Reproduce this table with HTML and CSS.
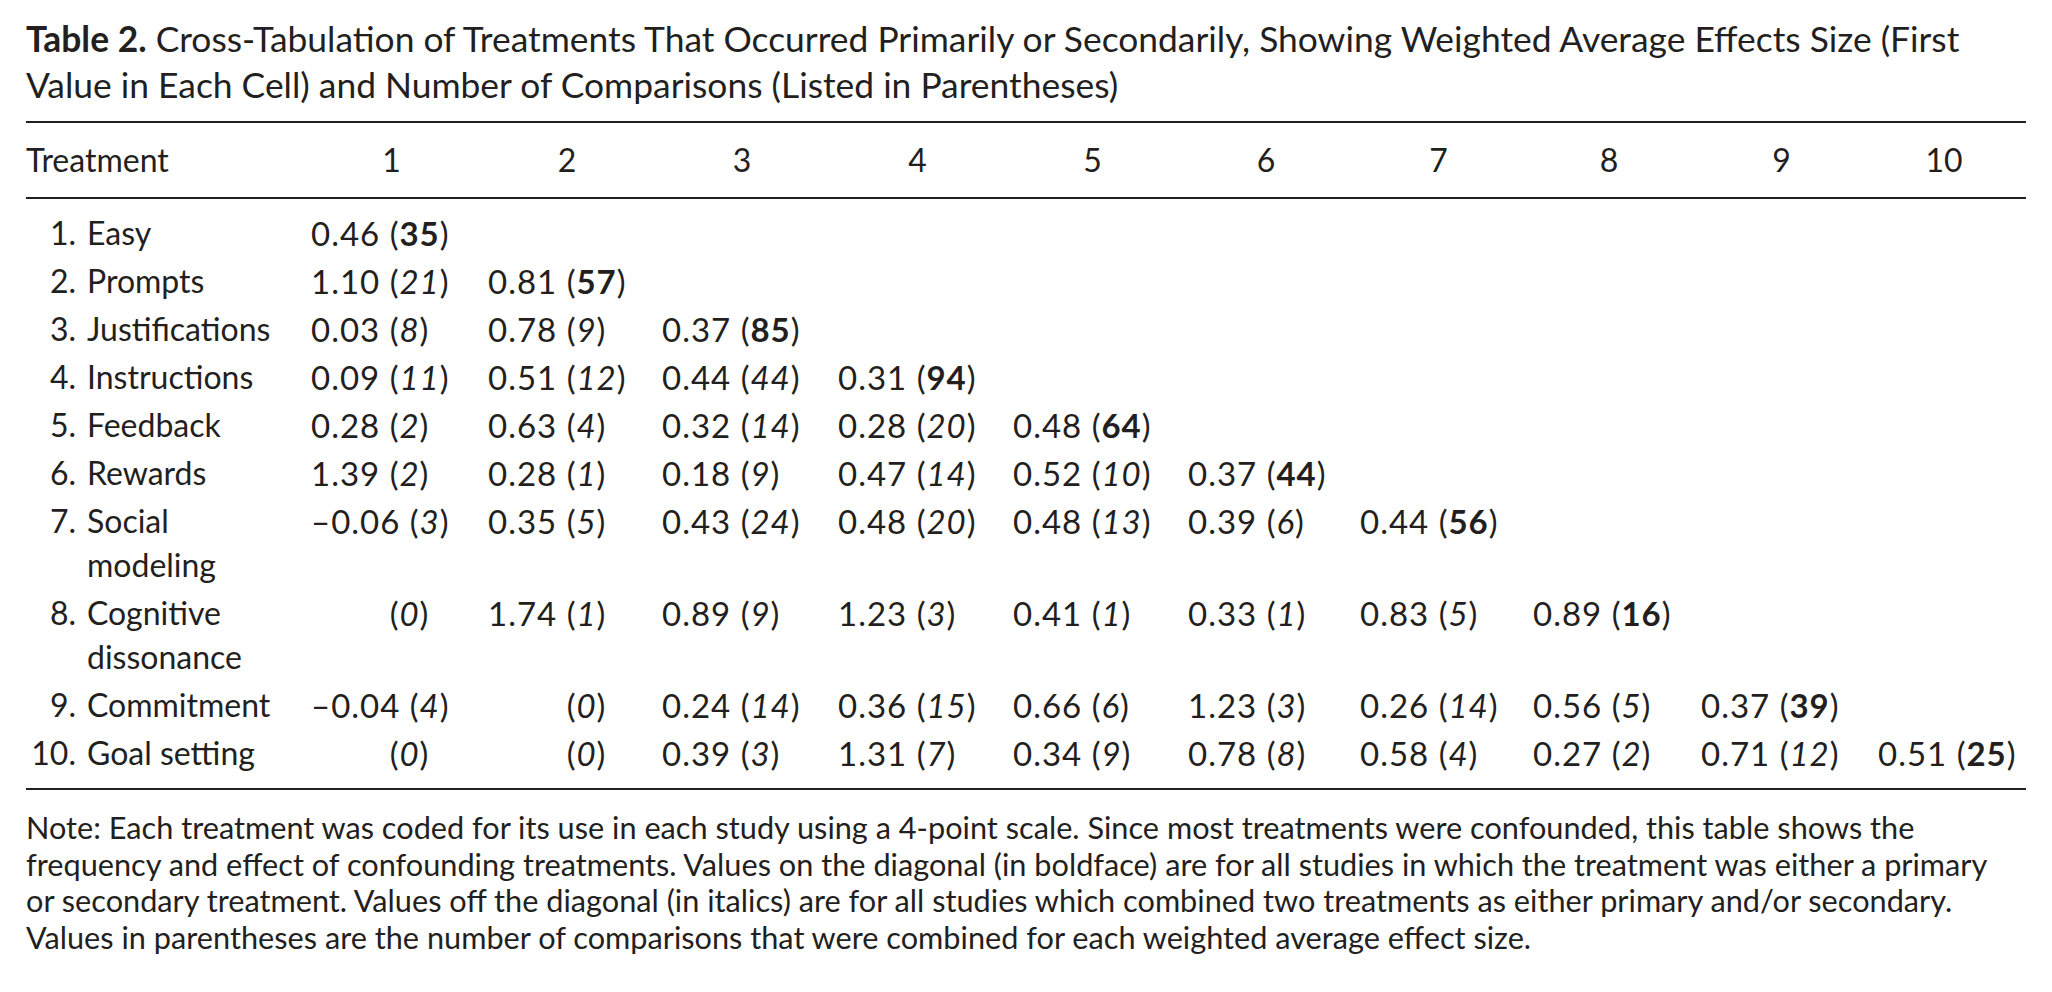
FILE: index.html
```html
<!DOCTYPE html>
<html lang="en">
<head>
<meta charset="utf-8">
<title>Table 2</title>
<link rel="stylesheet" href="styles.css">
</head>
<body>
<div class="page">
  <p class="caption"><b>Table 2.</b> Cross-Tabulation of Treatments That Occurred Primarily or Secondarily, Showing Weighted Average Effects Size (First Value in Each Cell) and Number of Comparisons (Listed in Parentheses)</p>
  <table class="xtab">
    <colgroup>
      <col class="w-label"><col class="w-1"><col class="w-2"><col class="w-3"><col class="w-4"><col class="w-5"><col class="w-6"><col class="w-7"><col class="w-8"><col class="w-9"><col class="w-10">
    </colgroup>
    <thead>
      <tr><th class="th-label">Treatment</th><th>1</th><th>2</th><th>3</th><th>4</th><th>5</th><th>6</th><th>7</th><th>8</th><th>9</th><th>10</th></tr>
    </thead>
    <tbody>
      <tr class="first"><td class="label"><span class="num">1.</span><span class="name">Easy</span></td><td>0.46 (<b>35</b>)</td><td></td><td></td><td></td><td></td><td></td><td></td><td></td><td></td><td></td></tr>
      <tr><td class="label"><span class="num">2.</span><span class="name">Prompts</span></td><td>1.10 (<i>21</i>)</td><td>0.81 (<b>57</b>)</td><td></td><td></td><td></td><td></td><td></td><td></td><td></td><td></td></tr>
      <tr><td class="label"><span class="num">3.</span><span class="name">Justifications</span></td><td>0.03 (<i>8</i>)</td><td>0.78 (<i>9</i>)</td><td>0.37 (<b>85</b>)</td><td></td><td></td><td></td><td></td><td></td><td></td><td></td></tr>
      <tr><td class="label"><span class="num">4.</span><span class="name">Instructions</span></td><td>0.09 (<i>11</i>)</td><td>0.51 (<i>12</i>)</td><td>0.44 (<i>44</i>)</td><td>0.31 (<b>94</b>)</td><td></td><td></td><td></td><td></td><td></td><td></td></tr>
      <tr><td class="label"><span class="num">5.</span><span class="name">Feedback</span></td><td>0.28 (<i>2</i>)</td><td>0.63 (<i>4</i>)</td><td>0.32 (<i>14</i>)</td><td>0.28 (<i>20</i>)</td><td>0.48 (<b>64</b>)</td><td></td><td></td><td></td><td></td><td></td></tr>
      <tr><td class="label"><span class="num">6.</span><span class="name">Rewards</span></td><td>1.39 (<i>2</i>)</td><td>0.28 (<i>1</i>)</td><td>0.18 (<i>9</i>)</td><td>0.47 (<i>14</i>)</td><td>0.52 (<i>10</i>)</td><td>0.37 (<b>44</b>)</td><td></td><td></td><td></td><td></td></tr>
      <tr><td class="label"><span class="num">7.</span><span class="name">Social modeling</span></td><td>&ndash;0.06 (<i>3</i>)</td><td>0.35 (<i>5</i>)</td><td>0.43 (<i>24</i>)</td><td>0.48 (<i>20</i>)</td><td>0.48 (<i>13</i>)</td><td>0.39 (<i>6</i>)</td><td>0.44 (<b>56</b>)</td><td></td><td></td><td></td></tr>
      <tr><td class="label"><span class="num">8.</span><span class="name">Cognitive dissonance</span></td><td><span class="ph">0.00 </span>(<i>0</i>)</td><td>1.74 (<i>1</i>)</td><td>0.89 (<i>9</i>)</td><td>1.23 (<i>3</i>)</td><td>0.41 (<i>1</i>)</td><td>0.33 (<i>1</i>)</td><td>0.83 (<i>5</i>)</td><td>0.89 (<b>16</b>)</td><td></td><td></td></tr>
      <tr><td class="label"><span class="num">9.</span><span class="name">Commitment</span></td><td>&ndash;0.04 (<i>4</i>)</td><td><span class="ph">0.00 </span>(<i>0</i>)</td><td>0.24 (<i>14</i>)</td><td>0.36 (<i>15</i>)</td><td>0.66 (<i>6</i>)</td><td>1.23 (<i>3</i>)</td><td>0.26 (<i>14</i>)</td><td>0.56 (<i>5</i>)</td><td>0.37 (<b>39</b>)</td><td></td></tr>
      <tr class="last"><td class="label"><span class="num">10.</span><span class="name">Goal setting</span></td><td><span class="ph">0.00 </span>(<i>0</i>)</td><td><span class="ph">0.00 </span>(<i>0</i>)</td><td>0.39 (<i>3</i>)</td><td>1.31 (<i>7</i>)</td><td>0.34 (<i>9</i>)</td><td>0.78 (<i>8</i>)</td><td>0.58 (<i>4</i>)</td><td>0.27 (<i>2</i>)</td><td>0.71 (<i>12</i>)</td><td>0.51 (<b>25</b>)</td></tr>
    </tbody>
  </table>
  <p class="note">Note: Each treatment was coded for its use in each study using a 4-point scale. Since most treatments were confounded, this table shows the frequency and effect of confounding treatments. Values on the diagonal (in boldface) are for all studies in which the treatment was either a primary or secondary treatment. Values off the diagonal (in italics) are for all studies which combined two treatments as either primary and/or secondary. Values in parentheses are the number of comparisons that were combined for each weighted average effect size.</p>
</div>
</body>
</html>
```

FILE: styles.css
```css
html, body {
  margin: 0;
  padding: 0;
  background: #ffffff;
  overflow: hidden;
}

body {
  font-family: Lato, "Open Sans", "Liberation Sans", sans-serif;
  color: #231f20;
}

.page {
  width: 2000px;
  padding: 16px 0 0 26px;
}

.caption {
  margin: 0;
  width: 1960px;
  font-size: 35.4px;
  line-height: 46px;
}

.caption b {
  font-weight: 700;
}

.xtab {
  margin-top: 13px;
  width: 2000px;
  table-layout: fixed;
  border-collapse: collapse;
  border-top: 2px solid #231f20;
  border-bottom: 2px solid #231f20;
  font-size: 32px;
}

.w-label { width: 285px; }
.w-1 { width: 177px; }
.w-2 { width: 174px; }
.w-3 { width: 176px; }
.w-4 { width: 175px; }
.w-5 { width: 175px; }
.w-6 { width: 172px; }
.w-7 { width: 173px; }
.w-8 { width: 168px; }
.w-9 { width: 177px; }
.w-10 { width: 148px; }

.xtab thead tr {
  border-bottom: 2px solid #231f20;
}

.xtab th {
  font-weight: 400;
  line-height: 46px;
  padding: 14px 16px 14px 0;
  text-align: center;
}

.xtab th.th-label {
  text-align: left;
}

.xtab td {
  vertical-align: top;
  text-align: left;
  line-height: 44px;
  padding: 2px 0;
  white-space: nowrap;
  font-size: 33px;
  letter-spacing: 1px;
}

.xtab tr.first td {
  padding-top: 12px;
}

.xtab tr.last td {
  padding-bottom: 13px;
}

.xtab td.label {
  white-space: normal;
  padding-right: 8px;
  font-size: 32px;
  letter-spacing: 0;
}

.label {
  display: flex;
}

.num {
  flex: none;
  width: 50px;
  text-align: right;
}

.name {
  margin-left: 11px;
}

.xtab b {
  font-weight: 700;
}

.ph {
  visibility: hidden;
}

.note {
  margin: 20px 0 0 0;
  width: 1975px;
  font-size: 30.7px;
  line-height: 36.6px;
}
```
